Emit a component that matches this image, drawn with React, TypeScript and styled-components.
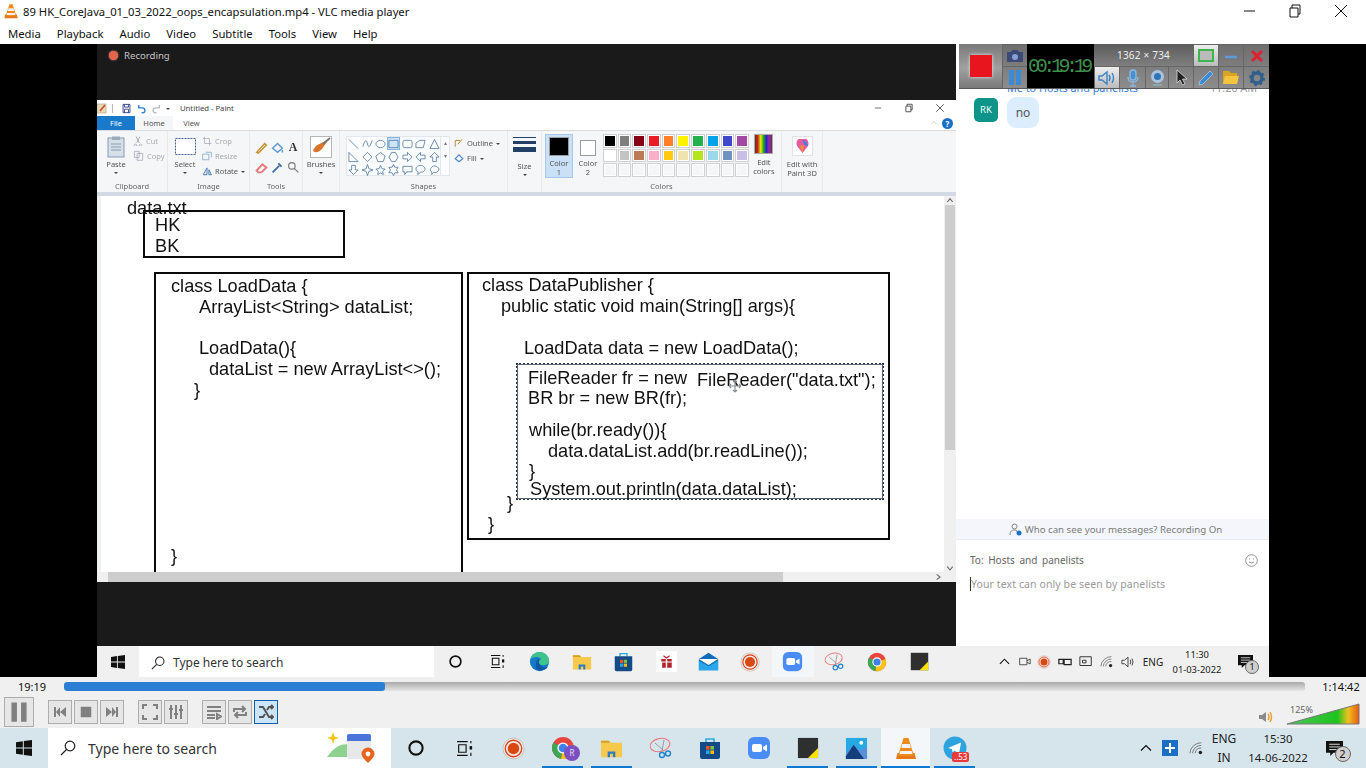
import React from "react";
import styled, { createGlobalStyle } from "styled-components";

const GlobalStyle = createGlobalStyle`
  html, body { margin: 0; padding: 0; background: #000; overflow: hidden; }
  * { box-sizing: border-box; }
`;

const UI = `"Noto Sans", "Open Sans", sans-serif`;

const Page = styled.div`
  width: 1366px;
  height: 768px;
  display: flex;
  flex-direction: column;
  overflow: hidden;
  font-family: ${UI};
  background: #000;
`;

/* ---- VLC chrome ---- */
const TitleBar = styled.div`
  height: 22px;
  background: #fff;
  display: flex;
  align-items: center;
  padding: 0 4px 0 3px;
  font-size: 11.25px;
  color: #111;
  gap: 4px;
`;
const TitleText = styled.span`
  flex: 1;
  white-space: nowrap;
`;
const WinButton = styled.div`
  width: 42px;
  height: 22px;
  display: flex;
  align-items: center;
  justify-content: center;
`;
const MenuBar = styled.div`
  height: 22px;
  background: #fff;
  display: flex;
  align-items: center;
  padding-left: 8px;
  gap: 16px;
  font-size: 11.3px;
  color: #111;
`;
const VideoRow = styled.div`
  height: 633px;
  display: flex;
  justify-content: center;
  padding-left: 97px;
  padding-right: 97px;
  background: #000;
`;
const Screen = styled.div`
  width: 1172px;
  display: flex;
  flex-direction: column;
  position: relative;
`;
const ScreenMain = styled.div`
  height: 602px;
  display: flex;
`;
const Meeting = styled.div`
  width: 859px;
  background: #1a1a1a;
  display: flex;
  flex-direction: column;
`;
const RecordingBar = styled.div`
  height: 56px;
  display: flex;
  align-items: flex-start;
  padding: 6px 0 0 12px;
  gap: 6px;
  color: #c4c4c4;
  font-size: 9.6px;
  line-height: 11px;
`;
const RecDot = styled.span`
  width: 9px;
  height: 9px;
  margin-top: 1px;
  border-radius: 50%;
  background: #e4644c;
  box-shadow: 0 0 2px #f0a090;
`;

/* ---- Paint ---- */
const Paint = styled.div`
  height: 482px;
  background: #fff;
  display: flex;
  flex-direction: column;
  color: #555;
  font-size: 7.5px;
  overflow: hidden;
`;
const PaintTitle = styled.div`
  height: 16px;
  display: flex;
  align-items: center;
  gap: 4px;
  padding-right: 3px;
  font-size: 7.7px;
  color: #444;
`;
const TitleSep = styled.span`
  width: 1px;
  height: 9px;
  margin: 0 4px 0 1px;
  background: #bbb;
`;
const PaintTitleName = styled.span`
  flex: 1;
  margin-left: 6px;
`;
const PaintWinBtn = styled.div`
  width: 27px;
  display: flex;
  justify-content: center;
  align-items: center;
`;
const PaintTabs = styled.div`
  height: 15px;
  display: flex;
  align-items: stretch;
  font-size: 7.5px;
  border-bottom: 1px solid #dcdcdc;
`;
const PaintTab = styled.div<{ $kind?: "file" | "active"; $w: number }>`
  width: ${(p) => p.$w}px;
  display: flex;
  align-items: center;
  justify-content: center;
  background: ${(p) => (p.$kind === "file" ? "#1979ca" : p.$kind === "active" ? "#f5f6f7" : "#fff")};
  color: ${(p) => (p.$kind === "file" ? "#fff" : "#555")};
`;
const TabSpacer = styled.div`
  flex: 1;
  display: flex;
  align-items: center;
  justify-content: flex-end;
  gap: 4px;
  padding-right: 3px;
`;
const HelpDot = styled.span`
  width: 11px;
  height: 11px;
  border-radius: 50%;
  background: #1a6fc4;
  color: #fff;
  font-size: 8px;
  font-weight: 700;
  line-height: 11px;
  text-align: center;
`;
const Ribbon = styled.div`
  height: 61px;
  background: #f5f6f7;
  display: flex;
  filter: blur(0.3px);
`;
const RibbonGroup = styled.div<{ $w: number }>`
  width: ${(p) => p.$w}px;
  display: flex;
  flex-direction: column;
  border-right: 1px solid #e8e9ea;
`;
const GroupBody = styled.div<{ $pad?: string; $gap?: number }>`
  flex: 1;
  display: flex;
  padding: ${(p) => p.$pad ?? "3px 4px 0"};
  gap: ${(p) => p.$gap ?? 5}px;
  min-height: 0;
  > * {
    flex-shrink: 0;
  }
`;
const GroupLabel = styled.div`
  height: 11px;
  text-align: center;
  line-height: 10px;
  color: #666;
`;
const BigTool = styled.div<{ $w?: number }>`
  width: ${(p) => p.$w ?? 30}px;
  display: flex;
  flex-direction: column;
  align-items: center;
  gap: 1px;
  line-height: 9px;
  text-align: center;
`;
const BigIconBox = styled.div`
  height: 25px;
  display: flex;
  align-items: center;
  justify-content: center;
`;
const Caret = styled.span`
  width: 0;
  height: 0;
  margin-top: 2px;
  border-left: 2px solid transparent;
  border-right: 2px solid transparent;
  border-top: 2.5px solid #444;
`;
const SmallTools = styled.div`
  display: flex;
  flex-direction: column;
  gap: 4px;
  padding-top: 1px;
`;
const ShapeTools = styled(SmallTools)`
  margin-left: 4px;
`;
const SmallTool = styled.div<{ $dim?: boolean }>`
  display: flex;
  align-items: center;
  gap: 3px;
  height: 11px;
  color: ${(p) => (p.$dim ? "#aaa" : "#555")};
  white-space: nowrap;
`;
const ToolGrid = styled.div`
  display: grid;
  grid-template-columns: repeat(3, 16px);
  grid-auto-rows: 20px;
  padding: 6px 0 0 3px;
  justify-items: center;
  align-items: center;
`;
const TextToolGlyph = styled.span`
  font-family: "Liberation Serif", serif;
  font-weight: 700;
  font-size: 12px;
  color: #333;
`;
const ShapesBox = styled.div`
  width: 95px;
  height: 40px;
  background: #fbfcfd;
  border: 1px solid #e3e6ea;
  display: grid;
  grid-template-columns: repeat(7, 13.4px);
  grid-auto-rows: 13px;
  justify-items: center;
  align-items: center;
`;
const ShapeCell = styled.div<{ $on?: boolean }>`
  width: 13px;
  height: 13px;
  display: flex;
  align-items: center;
  justify-content: center;
  background: ${(p) => (p.$on ? "#cde4f7" : "transparent")};
  border: 1px solid ${(p) => (p.$on ? "#82b5de" : "transparent")};
`;
const ShapeScroll = styled.div`
  width: 9px;
  height: 40px;
  background: #fbfcfd;
  border: 1px solid #e3e6ea;
  border-left: 0;
  color: #777;
  font-size: 6px;
  line-height: 13px;
  text-align: center;
`;
const SizeLines = styled.div`
  width: 23px;
  height: 20px;
  display: flex;
  flex-direction: column;
  gap: 3px;
  margin-top: 3px;
`;
const SizeLine = styled.div<{ $h: number }>`
  height: ${(p) => p.$h}px;
  background: #223f66;
`;
const ColorPick = styled.div<{ $on?: boolean; $w: number }>`
  width: ${(p) => p.$w}px;
  height: 44px;
  display: flex;
  flex-direction: column;
  align-items: center;
  text-align: center;
  line-height: 9px;
  padding-top: 2px;
  background: ${(p) => (p.$on ? "#c9e0f6" : "transparent")};
  border: 1px solid ${(p) => (p.$on ? "#a5c9ea" : "transparent")};
`;
const ColorChip = styled.div<{ $c: string; $big?: boolean }>`
  width: ${(p) => (p.$big ? 20 : 16)}px;
  height: ${(p) => (p.$big ? 20 : 16)}px;
  margin: ${(p) => (p.$big ? "0 0 3px" : "3px 0 3px")};
  background: ${(p) => p.$c};
  border: 1px solid #9a9a9a;
`;
const Palette = styled.div`
  display: grid;
  grid-template-columns: repeat(10, 13.7px);
  grid-auto-rows: 13.7px;
  gap: 1px;
  align-self: flex-start;
`;
const Swatch = styled.div<{ $c: string }>`
  background: ${(p) => p.$c};
  border: 1px solid #d0d0d0;
  box-shadow: inset 0 0 0 1px #fff;
`;
const RainbowBox = styled.div`
  width: 19px;
  height: 20px;
  border: 1px solid #aaa;
  background: linear-gradient(90deg, #5b3a1c, #c22, #ee0, #2a2, #22c, #a2a, #444);
`;
const StackLabel = styled.div<{ $mt?: number }>`
  text-align: center;
  line-height: 9px;
  margin-top: ${(p) => p.$mt ?? 3}px;
`;
const Paint3DBox = styled.div`
  width: 21px;
  height: 20px;
  background: #fff;
  border: 1px solid #e2e2e2;
  display: flex;
  align-items: center;
  justify-content: center;
`;
const RibbonEdge = styled.div`
  height: 4px;
  background: #d3dae6;
`;
const WorkArea = styled.div`
  flex: 1;
  display: flex;
  min-height: 0;
  padding-left: 4px;
  background: #f0f1f3;
`;
const Canvas = styled.div`
  flex: 1;
  position: relative;
  overflow: hidden;
  background: #fff;
  font-family: "Liberation Sans", Arial, sans-serif;
  color: #111;
`;
const CodeLine = styled.span<{ $x: number; $y: number }>`
  position: absolute;
  left: ${(p) => p.$x - 101}px;
  top: ${(p) => p.$y - 196}px;
  transform: translateY(-50%);
  font-size: 18.2px;
  line-height: 20px;
  white-space: nowrap;
  filter: blur(0.25px);
`;
const DrawBox = styled.div<{ $x: number; $y: number; $w: number; $h: number }>`
  position: absolute;
  left: ${(p) => p.$x - 101}px;
  top: ${(p) => p.$y - 196}px;
  width: ${(p) => p.$w}px;
  height: ${(p) => p.$h}px;
  border: 2px solid #0a0a0a;
`;
const SelectBox = styled(DrawBox)`
  border: 2px dotted #1e2d4d;
  outline: 1px solid #5c6478;
  outline-offset: -2px;
`;
const MoveCursor = styled.svg`
  position: absolute;
  left: ${728 - 101}px;
  top: ${379 - 196}px;
`;
const VScroll = styled.div`
  width: 12px;
  background: #f0f0f0;
  display: flex;
  flex-direction: column;
  align-items: center;
  font-size: 7px;
  line-height: 8px;
  color: #555;
`;
const VThumb = styled.div`
  width: 10px;
  height: 245px;
  margin-top: 1px;
  background: #cdcdcd;
`;
const ScrollGrow = styled.div`
  flex: 1;
`;
const HScroll = styled.div`
  height: 10px;
  background: #f0f0f0;
  display: flex;
  align-items: stretch;
  padding-left: 11px;
  padding-right: 14px;
`;
const HThumb = styled.div`
  width: 675px;
  background: #cdcdcd;
`;
const HGrow = styled.div`
  flex: 1;
  display: flex;
  align-items: center;
  justify-content: flex-end;
`;
const MeetingGrow = styled.div`
  flex: 1;
  background: #1a1a1a;
`;

/* ---- Zoom chat ---- */
const Chat = styled.div`
  width: 313px;
  background: #fff;
  display: flex;
  flex-direction: column;
`;
const ChatScroll = styled.div`
  flex: 1;
  padding: 37px 0 0 18px;
`;
const ChatFrom = styled.div`
  display: flex;
  justify-content: space-between;
  font-size: 10.8px;
  line-height: 14px;
  color: #3a7bd5;
  padding: 0 12px 0 33px;
  margin-bottom: 2px;
`;
const ChatTime = styled.span`
  color: #999;
`;
const ChatMsg = styled.div`
  display: flex;
  gap: 9px;
  align-items: flex-start;
`;
const Avatar = styled.div`
  width: 24px;
  height: 24px;
  margin-top: 1px;
  border-radius: 5px;
  background: #0e9488;
  color: #e8fffb;
  font-size: 9.5px;
  line-height: 24px;
  text-align: center;
`;
const Bubble = styled.div`
  width: 32px;
  height: 31px;
  border-radius: 9px;
  background: #dcedfd;
  color: #555;
  font-size: 12px;
  line-height: 31px;
  text-align: center;
`;
const Notice = styled.div`
  height: 21px;
  background: #f4f6fb;
  border-bottom: 1px solid #e9ebf0;
  display: flex;
  align-items: center;
  justify-content: center;
  gap: 3px;
  color: #7c7c7c;
  font-size: 9.7px;
  padding-left: 6px;
`;
const Composer = styled.div`
  height: 106px;
  padding: 12px 11px 0 14px;
  color: #666;
  font-size: 10px;
`;
const ToRow = styled.div`
  display: flex;
  align-items: center;
  justify-content: space-between;
  height: 16px;
`;
const ToLabel = styled.span`
  word-spacing: 2px;
`;
const Placeholder = styled.div`
  margin-top: 9px;
  font-size: 10.5px;
  color: #999;
  line-height: 14px;
  border-left: 1px solid #333;
  letter-spacing: 0.1px;
`;

/* ---- recorder overlay ---- */
const Recorder = styled.div`
  position: absolute;
  left: 862px;
  top: 0;
  width: 310px;
  height: 45px;
  display: flex;
  background: linear-gradient(#6d6d6d, #8d8d8d);
  border-bottom: 1px solid #5a5a5a;
`;
const RecStop = styled.div`
  width: 43px;
  display: flex;
  align-items: center;
  justify-content: center;
  background: linear-gradient(#7a7a7a, #a0a0a0 55%, #7a7a7a);
`;
const RecRed = styled.div`
  width: 22px;
  height: 22px;
  background: #e8141e;
  box-shadow: 0 0 3px #eee;
`;
const RecSideCol = styled.div`
  width: 25px;
  display: flex;
  flex-direction: column;
`;
const RecCell = styled.div<{ $w?: number; $on?: boolean }>`
  flex: ${(p) => (p.$w ? `0 0 ${p.$w}px` : "1")};
  display: flex;
  align-items: center;
  justify-content: center;
  border-left: 1px solid #666;
  border-top: 1px solid #666;
  background: ${(p) => (p.$on ? "linear-gradient(#eee, #bbb)" : "transparent")};
`;
const RecLcd = styled.div`
  width: 67px;
  background: #000;
  color: #3f8f4c;
  font-family: "Liberation Mono", monospace;
  font-size: 20px;
  letter-spacing: -4.4px;
  padding-right: 4px;
  display: flex;
  align-items: center;
  justify-content: center;
`;
const RecRight = styled.div`
  flex: 1;
  display: flex;
  flex-direction: column;
`;
const RecRow = styled.div`
  flex: 1;
  display: flex;
`;
const RecSize = styled.div`
  flex: 1;
  color: #eee;
  font-size: 10px;
  letter-spacing: 0.2px;
  display: flex;
  align-items: center;
  justify-content: center;
  background: linear-gradient(#5c5c5c, #7f7f7f);
`;

/* ---- taskbars ---- */
const InnerTaskbar = styled.div`
  height: 31px;
  background: #f0f0f0;
  display: flex;
  align-items: stretch;
  color: #222;
  font-size: 10px;
`;
const StartSlot = styled.div<{ $w: number }>`
  width: ${(p) => p.$w}px;
  display: flex;
  align-items: center;
  justify-content: center;
`;
const SearchBox = styled.div<{ $w: number; $size: number; $gap: number; $pt?: number }>`
  width: ${(p) => p.$w}px;
  background: #fff;
  display: flex;
  align-items: center;
  gap: ${(p) => p.$gap}px;
  padding: ${(p) => p.$pt ?? 0}px 12px 0;
  font-size: ${(p) => p.$size}px;
  color: #333;
`;
const SearchGrow = styled.span`
  flex: 1;
  white-space: nowrap;
`;
const TaskSlot = styled.div<{ $w: number; $on?: boolean; $bar?: boolean }>`
  width: ${(p) => p.$w}px;
  display: flex;
  align-items: center;
  justify-content: center;
  position: relative;
  background: ${(p) => (p.$on ? "#f4f7f9" : "transparent")};
  &::after {
    content: "";
    display: ${(p) => (p.$bar ? "block" : "none")};
    position: absolute;
    left: ${(p) => (p.$on ? 0 : 4)}px;
    right: ${(p) => (p.$on ? 0 : 4)}px;
    bottom: 0;
    height: 2px;
    background: #0f78d0;
  }
`;
const Tray = styled.div<{ $gap: number; $size: number; $pr: number }>`
  flex: 1;
  display: flex;
  align-items: center;
  justify-content: flex-end;
  gap: ${(p) => p.$gap}px;
  padding-right: ${(p) => p.$pr}px;
  font-size: ${(p) => p.$size}px;
  color: #222;
`;
const Clock = styled.div<{ $w: number; $size: number; $lh: number }>`
  width: ${(p) => p.$w}px;
  text-align: center;
  font-size: ${(p) => p.$size}px;
  line-height: ${(p) => p.$lh}px;
  white-space: nowrap;
`;
const NotifyWrap = styled.div<{ $w: number }>`
  width: ${(p) => p.$w}px;
  display: flex;
  justify-content: center;
  position: relative;
`;
const NotifyCount = styled.span<{ $s: number }>`
  position: absolute;
  left: 50%;
  top: 40%;
  width: ${(p) => p.$s}px;
  height: ${(p) => p.$s}px;
  border-radius: 50%;
  background: #cfcfcf;
  border: 1px solid #666;
  color: #111;
  font-size: ${(p) => p.$s - 5}px;
  line-height: ${(p) => p.$s - 2}px;
  text-align: center;
`;
const SeekRow = styled.div`
  height: 18px;
  background: #f0f0f0;
  display: flex;
  align-items: center;
  font-size: 11px;
  color: #111;
`;
const TimeLabel = styled.div<{ $w: number; $pl?: number }>`
  width: ${(p) => p.$w}px;
  padding-left: ${(p) => p.$pl ?? 0}px;
  text-align: center;
`;
const SeekTrack = styled.div`
  flex: 1;
  height: 9px;
  border-radius: 3px;
  background: linear-gradient(#a9a9a9, #e6e6e6);
  overflow: hidden;
`;
const SeekFill = styled.div`
  height: 100%;
  background: #2a7fd5;
  border-radius: 3px;
`;
const Controls = styled.div`
  height: 33px;
  background: #f0f0f0;
  display: flex;
  align-items: center;
  padding-left: 4px;
`;
const CtlGroup = styled.div<{ $ml: number }>`
  display: flex;
  gap: 2px;
  margin-left: ${(p) => p.$ml}px;
`;
const CtlButton = styled.div<{ $big?: boolean; $on?: boolean }>`
  width: ${(p) => (p.$big ? 30 : 24)}px;
  height: ${(p) => (p.$big ? 30 : 24)}px;
  display: flex;
  align-items: center;
  justify-content: center;
  border: 1px solid ${(p) => (p.$on ? "#0e5ea8" : "#adadad")};
  background: ${(p) => (p.$on ? "#cce4f7" : "#e6e6e6")};
`;
const CtlGrow = styled.div`
  flex: 1;
`;
const VolumeArea = styled.div`
  width: 103px;
  display: flex;
  align-items: flex-end;
  justify-content: flex-end;
  gap: 12px;
  margin: 4px 6px 0 0;
  position: relative;
`;
const VolumePercent = styled.span`
  position: absolute;
  left: 33px;
  top: 1px;
  color: #666;
  font-size: 9px;
  line-height: 12px;
`;
const MainTaskbar = styled.div`
  height: 40px;
  background: #d6e5ec;
  display: flex;
  align-items: stretch;
  color: #111;
`;
const Badge = styled.span`
  position: absolute;
  left: 22px;
  top: 24px;
  height: 10px;
  padding: 0 2px;
  border-radius: 2px;
  background: #e83a3a;
  color: #fff;
  font-size: 8px;
  line-height: 10px;
`;
const ProfileBadge = styled.span`
  position: absolute;
  left: 26px;
  top: 17px;
  width: 16px;
  height: 16px;
  border-radius: 50%;
  background: #7b4fc0;
  color: #e8ddf8;
  font-size: 8px;
  line-height: 16px;
  text-align: center;
`;
const TrayItem = styled.div<{ $w: number }>`
  width: ${(p) => p.$w}px;
  display: flex;
  justify-content: center;
  align-items: center;
`;

/* ---- drawings ---- */
type IconProps = { s?: number };

const VlcCone = ({ s = 16 }: IconProps) => (
  <svg width={s} height={s} viewBox="0 0 24 24">
    <path d="M2 23 L3.5 17 H20.5 L22 23 Z" fill="#e8791a" />
    <path d="M9.5 2 H14.5 L20 20 H4 Z" fill="#f08a1d" />
    <path d="M8.2 8 H15.8 L16.8 12 H7.2 Z" fill="#f4f4f4" />
    <path d="M6.3 15 H17.7 L18.4 18 H5.6 Z" fill="#f4f4f4" />
  </svg>
);
const WinLogo = ({ s = 16 }: IconProps) => (
  <svg width={s} height={s} viewBox="0 0 16 16" fill="#111">
    <path d="M0 2.2 6.8 1.2V7.4H0ZM7.8 1.1 16 0V7.4H7.8ZM0 8.5H6.8V14.8L0 13.8ZM7.8 8.5H16V16L7.8 14.9Z" />
  </svg>
);
const SearchGlass = ({ s = 16 }: IconProps) => (
  <svg width={s} height={s} viewBox="0 0 16 16" fill="none" stroke="#222" strokeWidth="1.2">
    <circle cx="10" cy="6" r="4.8" />
    <path d="M6.5 9.5 1 15" />
  </svg>
);
const CortanaRing = ({ s = 14 }: IconProps) => (
  <svg width={s} height={s} viewBox="0 0 14 14" fill="none" stroke="#111" strokeWidth="1.8">
    <circle cx="7" cy="7" r="5.8" />
  </svg>
);
const TaskView = ({ s = 16 }: IconProps) => (
  <svg width={s} height={s} viewBox="0 0 16 16" fill="none" stroke="#111" strokeWidth="1.1">
    <path d="M1 1.5H11M1 14.5H11M2.5 4.5H9.5V11.5H2.5ZM14 1V3M14 6V9M14 12V15" />
    <rect x="12.8" y="5.8" width="2.4" height="3" fill="#111" stroke="none" />
  </svg>
);
const EdgeIcon = ({ s = 22 }: IconProps) => (
  <svg width={s} height={s} viewBox="0 0 24 24">
    <circle cx="12" cy="12" r="11" fill="#1578c9" />
    <path d="M1.5 10C3 3 10 0 15 1.5 21 3 23.5 9 23 13.5 20 17 13 17 11 14 9.5 11.5 12 9 14 9 11 6 4 6 1.5 10Z" fill="#3ec48b" />
    <path d="M8 15C8 10 11 9 13 9.5 10.5 11 11 16 15 18 18 19.5 20.5 18.5 22 17.5 19 22.5 12.5 24 8.5 21 7 19.5 8 17 8 15Z" fill="#0c5aa6" />
  </svg>
);
const FolderIcon = ({ s = 22 }: IconProps) => (
  <svg width={s} height={s} viewBox="0 0 24 24">
    <path d="M1 4H9L11 6H23V21H1Z" fill="#f5c94c" />
    <path d="M1 4H9L11 6H1Z" fill="#d89f22" />
    <path d="M8 21V15H16V21H13.5V17.5H10.5V21Z" fill="#2b7cc4" />
  </svg>
);
const StoreIcon = ({ s = 22 }: IconProps) => (
  <svg width={s} height={s} viewBox="0 0 24 24">
    <path d="M8 6V3H16V6" fill="none" stroke="#2fa8e0" strokeWidth="1.6" />
    <path d="M2 6H22V21Q22 23 20 23H4Q2 23 2 21Z" fill="#144a85" />
    <rect x="8" y="10" width="3.6" height="3.6" fill="#e8552d" />
    <rect x="12.4" y="10" width="3.6" height="3.6" fill="#7cc13a" />
    <rect x="8" y="14.4" width="3.6" height="3.6" fill="#2aa3ea" />
    <rect x="12.4" y="14.4" width="3.6" height="3.6" fill="#fcb90d" />
  </svg>
);
const GiftIcon = ({ s = 22 }: IconProps) => (
  <svg width={s} height={s} viewBox="0 0 24 24">
    <rect width="24" height="24" fill="#fff" />
    <path d="M6 9H18V12H6ZM7 13H18V19H7Z" fill="#b3262c" />
    <path d="M11.2 7H12.8V20H11.2Z" fill="#fff" />
    <path d="M12 8 8.5 5.5M12 8 15.5 5.5" stroke="#b3262c" strokeWidth="1.5" />
  </svg>
);
const MailIcon = ({ s = 22 }: IconProps) => (
  <svg width={s} height={s} viewBox="0 0 24 24">
    <path d="M1 9 12 2 23 9V22H1Z" fill="#0f6cbd" />
    <path d="M1 9H23L12 16Z" fill="#fff" />
    <path d="M1 11 12 17.5 23 11V22H1Z" fill="#28a8ea" />
  </svg>
);
const RecordIcon = ({ s = 22 }: IconProps) => (
  <svg width={s} height={s} viewBox="0 0 24 24">
    <circle cx="12" cy="12" r="11" fill="#f4e9e4" stroke="#b8a8a0" strokeWidth="0.6" />
    <circle cx="12" cy="12" r="8.6" fill="none" stroke="#d9451e" strokeWidth="1.4" />
    <circle cx="12" cy="12" r="6" fill="#d9480f" />
  </svg>
);
const ZoomIcon = ({ s = 22 }: IconProps) => (
  <svg width={s} height={s} viewBox="0 0 24 24">
    <rect x="1" y="1" width="22" height="22" rx="6" fill="#4a8cf5" />
    <rect x="5" y="8" width="10" height="8" rx="2" fill="#fff" />
    <path d="M16 11 20 8.5V15.5L16 13Z" fill="#fff" />
  </svg>
);
const SnipIcon = ({ s = 24 }: IconProps) => (
  <svg width={s} height={s} viewBox="0 0 24 24" fill="none">
    <ellipse cx="11" cy="9" rx="10" ry="6.5" stroke="#e97b7b" strokeWidth="1.1" transform="rotate(-12 11 9)" />
    <path d="M6 7 14 14M15 4 13 15" stroke="#999" strokeWidth="1" />
    <circle cx="13" cy="19" r="2.5" stroke="#2485cf" strokeWidth="1.4" />
    <circle cx="19" cy="17.5" r="2.5" stroke="#2485cf" strokeWidth="1.4" />
  </svg>
);
const ChromeIcon = ({ s = 22 }: IconProps) => (
  <svg width={s} height={s} viewBox="0 0 24 24">
    <circle cx="12" cy="12" r="11" fill="#e8453c" />
    <path d="M12 12 22.5 8.5A11 11 0 0 1 10 22.8Z" fill="#fbc116" />
    <path d="M12 12 10 22.8A11 11 0 0 1 2.5 6.5Z" fill="#3aa757" />
    <circle cx="12" cy="12" r="5.6" fill="#fff" />
    <circle cx="12" cy="12" r="4.3" fill="#3f80ea" />
  </svg>
);
const StickyIcon = ({ s = 20 }: IconProps) => (
  <svg width={s} height={s} viewBox="0 0 24 24">
    <rect x="1" y="1" width="22" height="22" fill="#2f2f2f" />
    <path d="M12 23 23 12V23Z" fill="#fce100" />
  </svg>
);
const PhotosIcon = ({ s = 22 }: IconProps) => (
  <svg width={s} height={s} viewBox="0 0 24 24">
    <rect x="1" y="1" width="22" height="22" fill="#27a9e6" />
    <circle cx="17" cy="6" r="2" fill="#fff" />
    <path d="M1 17 9 8 16 14 23 11V23H1Z" fill="#5b8fd8" />
    <path d="M1 20 9 8 20 23H1Z" fill="#123f7c" />
  </svg>
);
const TelegramIcon = ({ s = 24 }: IconProps) => (
  <svg width={s} height={s} viewBox="0 0 24 24">
    <circle cx="12" cy="12" r="11.5" fill="#2fa3de" />
    <path d="M5 12 18 6.5 16 18 11.5 14.5 9.5 16.5 9 13Z" fill="#fff" />
  </svg>
);
const DecorIcon = () => (
  <svg width="53" height="34" viewBox="0 0 53 34">
    <path d="M1 26Q10 12 23 13V26Z" fill="#8fd18f" />
    <path d="M7 1 8.5 5.5 13 7 8.5 8.5 7 13 5.5 8.5 1 7 5.5 5.5Z" fill="#f5c518" />
    <rect x="21" y="3" width="24" height="25" rx="2" fill="#e6e8ea" />
    <path d="M21 5Q21 3 23 3H43Q45 3 45 5V10H21Z" fill="#4a74d9" />
    <path d="M35.5 23A6.5 6.5 0 0 1 48.5 23Q48.5 26 42 32 35.5 26 35.5 23Z" fill="#e8641e" />
    <circle cx="42" cy="23" r="2.4" fill="#fff" />
  </svg>
);
const PaintLogo = () => (
  <svg width="10" height="11" viewBox="0 0 10 11">
    <rect x="0" y="1" width="9" height="9" fill="#e9d9b8" stroke="#a98" strokeWidth="0.6" />
    <path d="M3 8 8 2" stroke="#c8562a" strokeWidth="1.8" />
  </svg>
);
const WifiIcon = ({ s = 14 }: IconProps) => (
  <svg width={s} height={s} viewBox="0 0 16 16" fill="none" stroke="#777" strokeWidth="1.1">
    <path d="M1 14A13 13 0 0 1 14 2M4 14A10 10 0 0 1 14 5M7 14A7 7 0 0 1 14 8" />
    <circle cx="13" cy="13" r="2" fill="#222" stroke="none" />
  </svg>
);
const SpeakerIcon = ({ s = 14 }: IconProps) => (
  <svg width={s} height={s} viewBox="0 0 16 16" fill="none" stroke="#333" strokeWidth="1">
    <path d="M1 6H4L8 2.5V13.5L4 10H1Z" />
    <path d="M10.5 5.5Q12 8 10.5 10.5M12.5 4Q15 8 12.5 12" />
  </svg>
);
const Chevron = ({ s = 12 }: IconProps) => (
  <svg width={s} height={s} viewBox="0 0 12 12" fill="none" stroke="#111" strokeWidth="1.2">
    <path d="M1 8.5 6 3.5 11 8.5" />
  </svg>
);
const NotifyIcon = ({ s = 16 }: IconProps) => (
  <svg width={s} height={s} viewBox="0 0 16 16">
    <path d="M0 1H16V12H7L4 15V12H0Z" fill="#111" />
    <path d="M3 4H13M3 6.5H13M3 9H10" stroke="#fff" strokeWidth="0.8" />
  </svg>
);
const Glyph = ({ d, s = 16, fill = "#808080" }: { d: string; s?: number; fill?: string }) => (
  <svg width={s} height={s} viewBox="0 0 16 16" fill={fill}>
    <path d={d} />
  </svg>
);
const StrokeGlyph = ({ d, s = 16, color = "#808080", w = 2, vb = 16 }: { d: string; s?: number; color?: string; w?: number; vb?: number }) => (
  <svg width={s} height={s} viewBox={`0 0 ${vb} ${vb}`} fill="none" stroke={color} strokeWidth={w}>
    <path d={d} />
  </svg>
);

const SHAPES = [
  "M1 1 11 11",
  "M1 9C3 1 5 1 6 6 7 11 9 9 11 2",
  "M1 6A5 4 0 1 0 11 6A5 4 0 1 0 1 6Z",
  "M1 2H11V10H1Z",
  "M3 2H9Q11 2 11 4V8Q11 10 9 10H3Q1 10 1 8V4Q1 2 3 2Z",
  "M1 10V5L5 2H11L9 10Z",
  "M6 1 11 11H1Z",
  "M1 1V11H11Z",
  "M6 1 11 6 6 11 1 6Z",
  "M6 1 11 5 9 11H3L1 5Z",
  "M4 1H8L11 6 8 11H4L1 6Z",
  "M1 4H6V1L11 6 6 11V8H1Z",
  "M11 4H6V1L1 6 6 11V8H11Z",
  "M4 11V6H1L6 1 11 6H8V11Z",
  "M4 1V6H1L6 11 11 6H8V1Z",
  "M6 0 7.5 4.5 12 6 7.5 7.5 6 12 4.5 7.5 0 6 4.5 4.5Z",
  "M6 1 7.5 4.5 11 5 8.5 7.5 9 11 6 9.2 3 11 3.5 7.5 1 5 4.5 4.5Z",
  "M6 0 7.5 3 11 3 9.3 6 11 9 7.5 9 6 12 4.5 9 1 9 2.7 6 1 3 4.5 3Z",
  "M1 2H11V8H5L3 11V8H1Z",
  "M6 1C9 1 11 3 11 5 11 7 9 8.5 6 8.5L3 11 3.5 8C2 7.5 1 6.5 1 5 1 3 3 1 6 1Z",
  "M3 3C4 1 8 1 9 3 11 3 11.5 6 10 7 9.5 9 6 9 5 8.5L3 11 3 8C1 7.5 1 4 3 3Z",
];

const COLORS = [
  "#000000", "#7f7f7f", "#880015", "#ed1c24", "#ff7f27", "#fff200", "#22b14c", "#00a2e8", "#3f48cc", "#a349a4",
  "#ffffff", "#c3c3c3", "#b97a57", "#ffaec9", "#ffc90e", "#efe4b0", "#b5e61d", "#99d9ea", "#7092be", "#c8bfe7",
  ...Array(10).fill("#f5f6f7"),
];

const CODE: [string, number, number][] = [
  ["data.txt", 127, 208],
  ["HK", 155, 225],
  ["BK", 155, 246],
  ["class LoadData {", 171, 286],
  ["ArrayList<String> dataList;", 199, 307],
  ["LoadData(){", 199, 348],
  ["dataList = new ArrayList<>();", 209, 369],
  ["}", 194, 390],
  ["}", 171, 556],
  ["class DataPublisher {", 482, 285],
  ["public static void main(String[] args){", 501, 306],
  ["LoadData data = new LoadData();", 524, 348],
  ["FileReader fr = new", 528, 378],
  ['FileReader("data.txt");', 697, 380],
  ["BR br = new BR(fr);", 528, 398],
  ["while(br.ready()){", 529, 430],
  ["data.dataList.add(br.readLine());", 548, 451],
  ["}", 529, 471],
  ["System.out.println(data.dataList);", 530, 489],
  ["}", 507, 503],
  ["}", 488, 524],
];

const MENU = ["Media", "Playback", "Audio", "Video", "Subtitle", "Tools", "View", "Help"];

export default function App() {
  return (
    <Page>
      <GlobalStyle />
      <TitleBar>
        <VlcCone s={16} />
        <TitleText>89 HK_CoreJava_01_03_2022_oops_encapsulation.mp4 - VLC media player</TitleText>
        <WinButton><StrokeGlyph d="M3 8H14" color="#111" w={1} /></WinButton>
        <WinButton><StrokeGlyph d="M3 5H11V14H3ZM5 5V2H13V11H11" color="#111" w={1} /></WinButton>
        <WinButton><StrokeGlyph d="M2 2 14 14M14 2 2 14" color="#111" w={1} /></WinButton>
      </TitleBar>
      <MenuBar>
        {MENU.map((m) => <span key={m}>{m}</span>)}
      </MenuBar>

      <VideoRow>
        <Screen>
          <ScreenMain>
            <Meeting>
              <RecordingBar><RecDot />Recording</RecordingBar>
              <Paint>
                <PaintTitle>
                  <PaintLogo />
                  <TitleSep />
                  <StrokeGlyph d="M3 2H13V14H3ZM5 2V6H11V2M5 14V9H11V14" color="#3b4a8a" s={11} w={1.4} />
                  <StrokeGlyph d="M4 3V7H9Q13 7 13 11T8 14" color="#2a7fd5" s={11} w={2} />
                  <StrokeGlyph d="M12 3V7H7Q3 7 3 11T8 14" color="#b5bcc4" s={11} w={2} />
                  <Caret />
                  <PaintTitleName>Untitled - Paint</PaintTitleName>
                  <PaintWinBtn><StrokeGlyph d="M3 8H13" color="#444" s={10} w={1.2} /></PaintWinBtn>
                  <PaintWinBtn><StrokeGlyph d="M3 5H11V14H3ZM5 5V2H13V11H11" color="#444" s={10} w={1.4} /></PaintWinBtn>
                  <PaintWinBtn><StrokeGlyph d="M2 2 14 14M14 2 2 14" color="#444" s={10} w={1.4} /></PaintWinBtn>
                </PaintTitle>
                <PaintTabs>
                  <PaintTab $kind="file" $w={38}>File</PaintTab>
                  <PaintTab $kind="active" $w={38}>Home</PaintTab>
                  <PaintTab $w={37}>View</PaintTab>
                  <TabSpacer>
                    <StrokeGlyph d="M3 10 8 5 13 10" color="#bbb" s={8} w={1.4} />
                    <HelpDot>?</HelpDot>
                  </TabSpacer>
                </PaintTabs>
                <Ribbon>
                  <RibbonGroup $w={71}>
                    <GroupBody $pad="3px 0 0 4px" $gap={2}>
                      <BigTool>
                        <BigIconBox>
                          <svg width="18" height="22" viewBox="0 0 18 22">
                            <rect x="1" y="2" width="16" height="19" fill="#d5dfea" stroke="#8a9bb0" />
                            <rect x="5" y="0.5" width="8" height="3.5" fill="#9aa9bb" />
                            <path d="M4 8H14M4 11H14M4 14H14" stroke="#8a9bb0" />
                          </svg>
                        </BigIconBox>
                        Paste
                        <Caret />
                      </BigTool>
                      <SmallTools>
                        <SmallTool $dim><StrokeGlyph d="M5 1 10 11M11 1 6 11M4 13A2 2 0 1 0 4.1 13M12 13A2 2 0 1 0 12.1 13" color="#99a" s={10} w={1.3} />Cut</SmallTool>
                        <SmallTool $dim><StrokeGlyph d="M2 2H9V11H2ZM6 5H14V15H6Z" color="#aab" s={11} w={1.2} />Copy</SmallTool>
                      </SmallTools>
                    </GroupBody>
                    <GroupLabel>Clipboard</GroupLabel>
                  </RibbonGroup>
                  <RibbonGroup $w={82}>
                    <GroupBody $pad="3px 0 0 5px">
                      <BigTool $w={24}>
                        <BigIconBox>
                          <svg width="21" height="17" viewBox="0 0 21 17">
                            <rect x="0.5" y="0.5" width="20" height="16" fill="#fff" stroke="#44638c" strokeDasharray="2 1" />
                          </svg>
                        </BigIconBox>
                        Select
                        <Caret />
                      </BigTool>
                      <SmallTools>
                        <SmallTool $dim><StrokeGlyph d="M4 1V12H15M1 4H12V15" color="#aab" s={10} w={1.2} />Crop</SmallTool>
                        <SmallTool $dim><StrokeGlyph d="M1 5H11V14H1ZM6 2H15V10" color="#7fa8c8" s={10} w={1.3} />Resize</SmallTool>
                        <SmallTool><StrokeGlyph d="M2 14 8 3 8 14ZM11 14 15 14 11 6Z" color="#4a7fb0" s={10} w={1.6} />Rotate<Caret /></SmallTool>
                      </SmallTools>
                    </GroupBody>
                    <GroupLabel>Image</GroupLabel>
                  </RibbonGroup>
                  <RibbonGroup $w={53}>
                    <GroupBody $pad="0">
                      <ToolGrid>
                        <StrokeGlyph d="M2 14 12 3 14 5 4 15Z" color="#c8912e" s={13} w={1.8} />
                        <StrokeGlyph d="M2 9 8 3 14 9 8 14ZM14 11V14" color="#5d9ad0" s={13} w={1.8} />
                        <TextToolGlyph>A</TextToolGlyph>
                        <StrokeGlyph d="M2 12 9 4 14 8 8 14H4Z" color="#e57a80" s={13} w={2.4} />
                        <StrokeGlyph d="M2 14 10 6M9 3 13 7" color="#3a6ea5" s={13} w={2.2} />
                        <StrokeGlyph d="M2 6A4 4 0 1 0 10 6A4 4 0 1 0 2 6M9 9 14 14" color="#777" s={13} w={1.4} />
                      </ToolGrid>
                    </GroupBody>
                    <GroupLabel>Tools</GroupLabel>
                  </RibbonGroup>
                  <RibbonGroup $w={37}>
                    <GroupBody $pad="3px 0 0 3px">
                      <BigTool>
                        <BigIconBox>
                          <svg width="22" height="22" viewBox="0 0 22 22">
                            <rect x="0.5" y="0.5" width="21" height="21" fill="#fff" stroke="#b6b6b6" />
                            <path d="M3 15C5 8 11 8 15 5L19 3 14 10C11 15 7 18 3 15Z" fill="#d9762a" />
                            <path d="M13 8 20 2" stroke="#777" strokeWidth="2" />
                          </svg>
                        </BigIconBox>
                        Brushes
                        <Caret />
                      </BigTool>
                    </GroupBody>
                    <GroupLabel />
                  </RibbonGroup>
                  <RibbonGroup $w={168}>
                    <GroupBody $pad="5px 0 0 6px" $gap={0}>
                      <ShapesBox>
                        {SHAPES.map((d, i) => (
                          <ShapeCell key={i} $on={i === 3}>
                            <StrokeGlyph d={d} color="#3f6b98" s={12} vb={12} w={0.8} />
                          </ShapeCell>
                        ))}
                      </ShapesBox>
                      <ShapeScroll>▴<br />▾</ShapeScroll>
                      <ShapeTools>
                        <SmallTool><StrokeGlyph d="M2 14V4H10M13 2 6 10" color="#b5893d" s={10} w={1.5} />Outline<Caret /></SmallTool>
                        <SmallTool><StrokeGlyph d="M2 9 8 3 14 9 8 14Z" color="#4d86c0" s={10} w={2} />Fill<Caret /></SmallTool>
                      </ShapeTools>
                    </GroupBody>
                    <GroupLabel>Shapes</GroupLabel>
                  </RibbonGroup>
                  <RibbonGroup $w={34}>
                    <GroupBody $pad="3px 5px 0">
                      <BigTool $w={23}>
                        <SizeLines>
                          <SizeLine $h={1} />
                          <SizeLine $h={3} />
                          <SizeLine $h={5} />
                        </SizeLines>
                        <StackLabel $mt={4}>Size</StackLabel>
                        <Caret />
                      </BigTool>
                    </GroupBody>
                    <GroupLabel />
                  </RibbonGroup>
                  <RibbonGroup $w={240}>
                    <GroupBody $pad="3px 0 0 3px">
                      <ColorPick $on $w={28}>
                        <ColorChip $c="#000" $big />
                        Color<br />1
                      </ColorPick>
                      <ColorPick $w={20}>
                        <ColorChip $c="#fff" />
                        Color<br />2
                      </ColorPick>
                      <Palette>
                        {COLORS.map((c, i) => <Swatch key={i} $c={c} />)}
                      </Palette>
                      <BigTool $w={20}>
                        <RainbowBox />
                        <StackLabel>Edit<br />colors</StackLabel>
                      </BigTool>
                    </GroupBody>
                    <GroupLabel>Colors</GroupLabel>
                  </RibbonGroup>
                  <RibbonGroup $w={41}>
                    <GroupBody $pad="5px 0 0 0">
                      <BigTool $w={40}>
                        <Paint3DBox>
                          <svg width="13" height="15" viewBox="0 0 13 15">
                            <path d="M6.5 14 1 7A6 6 0 1 1 12 7Z" fill="#e85a9a" />
                            <path d="M6.5 1A6 6 0 0 1 12 7L8 6Z" fill="#4b7de0" />
                            <path d="M6.5 14 4 7 8 6Z" fill="#f09030" />
                          </svg>
                        </Paint3DBox>
                        <StackLabel>Edit with<br />Paint 3D</StackLabel>
                      </BigTool>
                    </GroupBody>
                    <GroupLabel />
                  </RibbonGroup>
                </Ribbon>
                <RibbonEdge />
                <WorkArea>
                  <Canvas>
                    <DrawBox $x={143} $y={210} $w={202} $h={48} />
                    <DrawBox $x={154} $y={272} $w={309} $h={340} />
                    <DrawBox $x={467} $y={272} $w={423} $h={268} />
                    <SelectBox $x={516} $y={363} $w={368} $h={137} />
                    {CODE.map(([t, x, y], i) => (
                      <CodeLine key={i} $x={x} $y={y}>{t}</CodeLine>
                    ))}
                    <MoveCursor width="14" height="14" viewBox="0 0 14 14" fill="none" stroke="#8a8f96" strokeWidth="1.2">
                      <path d="M7 1V13M1 7H13M7 1 5 3M7 1 9 3M7 13 5 11M7 13 9 11M1 7 3 5M1 7 3 9M13 7 11 5M13 7 11 9" />
                    </MoveCursor>
                  </Canvas>
                  <VScroll>
                    <StrokeGlyph d="M2 9 6 4 10 9" color="#666" s={8} vb={12} w={1.6} />
                    <VThumb />
                    <ScrollGrow />
                    <StrokeGlyph d="M2 4 6 9 10 4" color="#666" s={8} vb={12} w={1.6} />
                  </VScroll>
                </WorkArea>
                <HScroll>
                  <HThumb />
                  <HGrow><StrokeGlyph d="M4 2 9 6 4 10" color="#666" s={8} vb={12} w={1.6} /></HGrow>
                </HScroll>
              </Paint>
              <MeetingGrow />
            </Meeting>
            <Chat>
              <ChatScroll>
                <ChatFrom>
                  <span>Me to Hosts and panelists</span>
                  <ChatTime>11:26 AM</ChatTime>
                </ChatFrom>
                <ChatMsg>
                  <Avatar>RK</Avatar>
                  <Bubble>no</Bubble>
                </ChatMsg>
              </ChatScroll>
              <Notice>
                <svg width="13" height="13" viewBox="0 0 13 13" fill="none" stroke="#777" strokeWidth="0.9">
                  <circle cx="5.5" cy="3.5" r="2.5" />
                  <path d="M1 12C1 8 3 7 5.5 7S8 8 8 9" />
                  <circle cx="10" cy="10" r="2.5" fill="#1a6fd0" stroke="none" />
                </svg>
                Who can see your messages? Recording On
              </Notice>
              <Composer>
                <ToRow>
                  <ToLabel>To: Hosts and panelists</ToLabel>
                  <svg width="13" height="13" viewBox="0 0 13 13" fill="none" stroke="#888" strokeWidth="0.9">
                    <circle cx="6.5" cy="6.5" r="5.8" />
                    <path d="M4 8Q6.5 10 9 8M4.5 4.5V5.5M8.5 4.5V5.5" />
                  </svg>
                </ToRow>
                <Placeholder>Your text can only be seen by panelists</Placeholder>
              </Composer>
            </Chat>
          </ScreenMain>

          <InnerTaskbar>
            <StartSlot $w={42}><WinLogo s={14} /></StartSlot>
            <SearchBox $w={295} $size={12} $gap={8} $pt={2}>
              <SearchGlass s={14} />
              <SearchGrow>Type here to search</SearchGrow>
            </SearchBox>
            <TaskSlot $w={42.2}><CortanaRing s={13} /></TaskSlot>
            <TaskSlot $w={42.2}><TaskView s={15} /></TaskSlot>
            <TaskSlot $w={42.2}><EdgeIcon s={21} /></TaskSlot>
            <TaskSlot $w={42.2}><FolderIcon s={20} /></TaskSlot>
            <TaskSlot $w={42.2}><StoreIcon s={21} /></TaskSlot>
            <TaskSlot $w={42.2}><GiftIcon s={21} /></TaskSlot>
            <TaskSlot $w={42.2}><MailIcon s={21} /></TaskSlot>
            <TaskSlot $w={42.2}><RecordIcon s={20} /></TaskSlot>
            <TaskSlot $w={42.2} $on><ZoomIcon s={21} /></TaskSlot>
            <TaskSlot $w={42.2}><SnipIcon s={21} /></TaskSlot>
            <TaskSlot $w={42.2}><ChromeIcon s={20} /></TaskSlot>
            <TaskSlot $w={42.2}><StickyIcon s={19} /></TaskSlot>
            <Tray $gap={4} $size={10} $pr={7}>
              <TrayItem $w={16}><Chevron s={11} /></TrayItem>
              <TrayItem $w={16}><StrokeGlyph d="M2 4H11V12H2ZM11 7 15 5V11L11 9" color="#333" s={13} w={1} /></TrayItem>
              <TrayItem $w={16}><RecordIcon s={14} /></TrayItem>
              <TrayItem $w={17}><StrokeGlyph d="M1 5H6V10H1ZM7 5H15V11H7Z" color="#222" s={14} w={1.4} /></TrayItem>
              <TrayItem $w={17}><StrokeGlyph d="M1 2H14V12H1ZM4 6H8V9H4Z" color="#333" s={14} w={1.1} /></TrayItem>
              <TrayItem $w={17}><WifiIcon s={13} /></TrayItem>
              <TrayItem $w={17}><SpeakerIcon s={14} /></TrayItem>
              <TrayItem $w={26}>ENG</TrayItem>
              <Clock $w={54} $size={9.4} $lh={15}>11:30<br />01-03-2022</Clock>
              <NotifyWrap $w={34}>
                <NotifyIcon s={15} />
                <NotifyCount $s={14}>1</NotifyCount>
              </NotifyWrap>
            </Tray>
          </InnerTaskbar>

          <Recorder>
            <RecStop><RecRed /></RecStop>
            <RecSideCol>
              <RecCell>
                <svg width="18" height="14" viewBox="0 0 18 14">
                  <path d="M1 3H5L6.5 1H11.5L13 3H17V13H1Z" fill="#3c4a78" />
                  <circle cx="9" cy="8" r="3" fill="#8aa0d0" />
                </svg>
              </RecCell>
              <RecCell>
                <svg width="14" height="15" viewBox="0 0 14 15" fill="#3b8ad6">
                  <rect x="1" y="0" width="5" height="15" />
                  <rect x="8" y="0" width="5" height="15" />
                </svg>
              </RecCell>
            </RecSideCol>
            <RecLcd>00:19:19</RecLcd>
            <RecRight>
              <RecRow>
                <RecSize>1362 × 734</RecSize>
                <RecCell $w={25} $on>
                  <svg width="16" height="13" viewBox="0 0 16 13">
                    <rect x="1" y="1" width="14" height="11" fill="#bbb" stroke="#3cb54a" strokeWidth="2" />
                  </svg>
                </RecCell>
                <RecCell $w={25}><StrokeGlyph d="M2 9H14" color="#5b9bd8" w={2.5} /></RecCell>
                <RecCell $w={26}><StrokeGlyph d="M3 3 13 13M13 3 3 13" color="#e02030" w={3} /></RecCell>
              </RecRow>
              <RecRow>
                <RecCell $w={25} $on>
                  <svg width="18" height="16" viewBox="0 0 18 16" fill="none" stroke="#3b82c4" strokeWidth="1.4">
                    <path d="M1 6H4L9 2V14L4 10H1Z" />
                    <path d="M11 5Q13 8 11 11M14 3Q17 8 14 13" />
                  </svg>
                </RecCell>
                <RecCell $w={26}>
                  <svg width="14" height="18" viewBox="0 0 14 18" fill="none" stroke="#8ab8de" strokeWidth="1.4">
                    <rect x="4" y="1" width="6" height="10" rx="3" fill="#4a90cf" />
                    <path d="M2 8Q2 13 7 13T12 8M7 13V17M4 17H10" />
                  </svg>
                </RecCell>
                <RecCell $w={23}>
                  <svg width="17" height="17" viewBox="0 0 17 17">
                    <circle cx="8.5" cy="7.5" r="6.5" fill="#a9c4dc" />
                    <circle cx="8.5" cy="7.5" r="3.5" fill="#2f75b5" />
                    <path d="M4 16H13" stroke="#8aa" strokeWidth="2" />
                  </svg>
                </RecCell>
                <RecCell $w={25}>
                  <svg width="13" height="17" viewBox="0 0 13 17">
                    <path d="M2 1V14L5 11 7.5 16 10 15 7.5 10H12Z" fill="#222" stroke="#ddd" strokeWidth="0.8" />
                  </svg>
                </RecCell>
                <RecCell $w={25}>
                  <svg width="18" height="18" viewBox="0 0 18 18">
                    <path d="M2 16 3 12 13 2 16 5 6 15Z" fill="#3b8ad6" stroke="#cde" strokeWidth="0.6" />
                  </svg>
                </RecCell>
                <RecCell $w={25}>
                  <svg width="18" height="15" viewBox="0 0 18 15">
                    <path d="M1 1H7L9 3H15V14H1Z" fill="#d9a520" />
                    <path d="M3 6H17L15 14H1Z" fill="#f5c542" />
                  </svg>
                </RecCell>
                <RecCell $w={26}>
                  <svg width="18" height="18" viewBox="0 0 18 18" fill="none">
                    <circle cx="9" cy="9" r="5" stroke="#2f5f8a" strokeWidth="3.4" />
                    <circle cx="9" cy="9" r="7" stroke="#2f5f8a" strokeWidth="2" strokeDasharray="2.6 2.9" />
                  </svg>
                </RecCell>
              </RecRow>
            </RecRight>
          </Recorder>
        </Screen>
      </VideoRow>

      <SeekRow>
        <TimeLabel $w={64}>19:19</TimeLabel>
        <SeekTrack><SeekFill style={{ width: `${(1159 / 4482) * 100}%` }} /></SeekTrack>
        <TimeLabel $w={61} $pl={11}>1:14:42</TimeLabel>
      </SeekRow>
      <Controls>
        <CtlButton $big><Glyph s={22} d="M2.5 1H6.5V15H2.5ZM9.5 1H13.5V15H9.5Z" /></CtlButton>
        <CtlGroup $ml={14}>
          <CtlButton><Glyph d="M2 3H4V13H2ZM8 3V13L4 8ZM14 3V13L8 8Z" /></CtlButton>
          <CtlButton><Glyph s={14} d="M2 2H14V14H2Z" /></CtlButton>
          <CtlButton><Glyph d="M2 3 8 8 2 13ZM8 3 12 8 8 13ZM12 3H14V13H12Z" /></CtlButton>
        </CtlGroup>
        <CtlGroup $ml={14}>
          <CtlButton><StrokeGlyph d="M1 5V1H5M11 1H15V5M15 11V15H11M5 15H1V11" /></CtlButton>
          <CtlButton><StrokeGlyph d="M3 1V15M8 1V15M13 1V15M1 5H5M6 10H10M11 6H15" /></CtlButton>
        </CtlGroup>
        <CtlGroup $ml={14}>
          <CtlButton><StrokeGlyph d="M1 3H15M1 7H15M1 11H9M1 14H9M11 10V15L15 12.5Z" /></CtlButton>
          <CtlButton><StrokeGlyph d="M2 8V5H12M10 2 13 5 10 8M14 8V11H4M6 8 3 11 6 14" /></CtlButton>
          <CtlButton $on><StrokeGlyph d="M1 3 5 3 11 13H15M1 13H5L7 10M9 6 11 3H15M13 1 15 3 13 5M13 11 15 13 13 15" color="#555" /></CtlButton>
        </CtlGroup>
        <CtlGrow />
        <VolumeArea>
          <svg width="16" height="16" viewBox="0 0 16 16" fill="none">
            <path d="M1 6H4L8 3V13L4 10H1Z" fill="#8a8a8a" />
            <path d="M10 5Q12 8 10 11M12 3Q15 8 12 13" stroke="#f09a20" strokeWidth="1.4" />
          </svg>
          <svg width="74" height="22" viewBox="0 0 74 22">
            <defs>
              <linearGradient id="vol" x1="0" x2="1" y1="0" y2="0">
                <stop offset="0" stopColor="#4fc35a" />
                <stop offset="0.7" stopColor="#1ec41e" />
                <stop offset="0.85" stopColor="#f0c020" />
                <stop offset="1" stopColor="#e85a10" />
              </linearGradient>
            </defs>
            <path d="M1 21 73 1V21Z" fill="url(#vol)" stroke="#777" strokeWidth="1" />
          </svg>
          <VolumePercent>125%</VolumePercent>
        </VolumeArea>
      </Controls>

      <MainTaskbar>
        <StartSlot $w={48}><WinLogo s={16} /></StartSlot>
        <SearchBox $w={343} $size={14} $gap={12}>
          <SearchGlass s={16} />
          <SearchGrow>Type here to search</SearchGrow>
          <DecorIcon />
        </SearchBox>
        <TaskSlot $w={49}><CortanaRing s={16} /></TaskSlot>
        <TaskSlot $w={49}><TaskView s={17} /></TaskSlot>
        <TaskSlot $w={49}><RecordIcon s={23} /></TaskSlot>
        <TaskSlot $w={49} $bar>
          <ChromeIcon s={24} />
          <ProfileBadge>R</ProfileBadge>
        </TaskSlot>
        <TaskSlot $w={49} $bar><FolderIcon s={23} /></TaskSlot>
        <TaskSlot $w={49}><SnipIcon s={24} /></TaskSlot>
        <TaskSlot $w={49}><StoreIcon s={24} /></TaskSlot>
        <TaskSlot $w={49}><ZoomIcon s={24} /></TaskSlot>
        <TaskSlot $w={49} $bar><StickyIcon s={22} /></TaskSlot>
        <TaskSlot $w={49} $bar><PhotosIcon s={23} /></TaskSlot>
        <TaskSlot $w={49} $bar $on><VlcCone s={24} /></TaskSlot>
        <TaskSlot $w={49} $bar>
          <TelegramIcon s={24} />
          <Badge>..53</Badge>
        </TaskSlot>
        <Tray $gap={0} $size={12} $pr={16}>
          <TrayItem $w={26}><Chevron s={12} /></TrayItem>
          <TrayItem $w={22}>
            <svg width="16" height="16" viewBox="0 0 16 16">
              <rect width="16" height="16" fill="#1a6fc4" />
              <path d="M8 3V13M3 8H13" stroke="#fff" strokeWidth="2" />
            </svg>
          </TrayItem>
          <TrayItem $w={30}><WifiIcon s={14} /></TrayItem>
          <Clock $w={26} $size={12} $lh={19}>ENG<br />IN</Clock>
          <Clock $w={82} $size={11.4} $lh={19}>15:30<br />14-06-2022</Clock>
          <NotifyWrap $w={31}>
            <NotifyIcon s={17} />
            <NotifyCount $s={16}>2</NotifyCount>
          </NotifyWrap>
        </Tray>
      </MainTaskbar>
    </Page>
  );
}
